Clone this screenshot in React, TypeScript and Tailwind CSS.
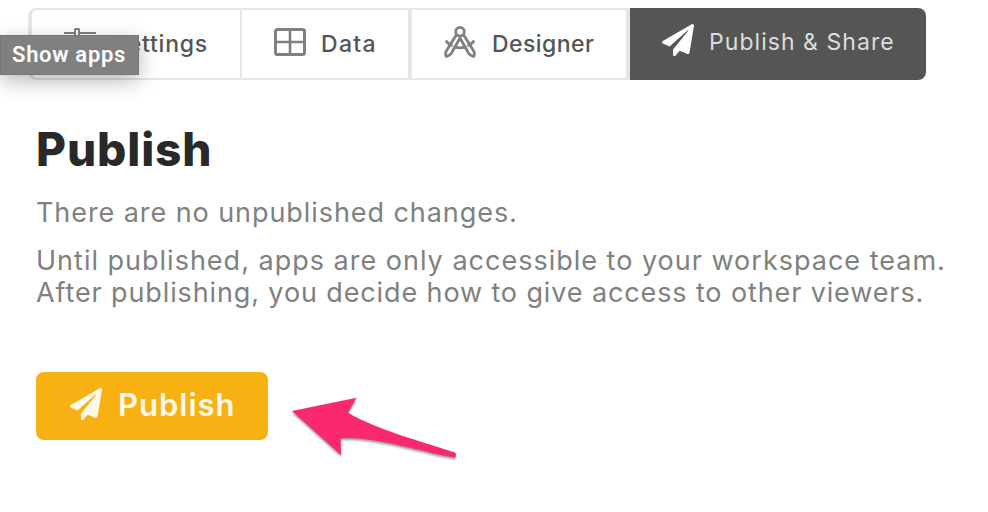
import React from "react";
import { FaPaperPlane } from "react-icons/fa";

const line = "border-[#e6e6e6]";

function SlidersIcon() {
  return (
    <svg className="h-8 w-8 shrink-0" viewBox="0 0 32 32" fill="none" stroke="#808080" strokeWidth="2">
      <path d="M0 5h10M16 5h16" />
      <rect x="11" y="1" width="4" height="8" rx="0.5" />
      <path d="M0 16h18M24 16h8M0 27h6M12 27h20" />
    </svg>
  );
}

function TableIcon() {
  return (
    <svg className="h-7 w-8 shrink-0" viewBox="0 0 32 28" fill="none" stroke="#808080">
      <rect x="1.5" y="1.5" width="29" height="25" rx="2" strokeWidth="3" />
      <path d="M16 2v24M2 14h28" strokeWidth="2.6" />
    </svg>
  );
}

function CompassIcon() {
  return (
    <svg className="h-8 w-8 shrink-0" viewBox="0 0 32 32" fill="none" stroke="#808080" strokeWidth="2.8" strokeLinejoin="round" strokeLinecap="round">
      <circle cx="16" cy="5.700" r="4.300" />
      <path d="M12.300 9L2 25.500Q1 30.500 2.800 30.500Q6 29.500 7.500 27L16 12L24.500 27Q26 29.500 29.200 30.500Q31 30.500 30 25.500L19.700 9" />
      <path d="M2.500 15.500Q5 18.500 7.500 19.500M11 21.200Q16 22.500 21 21.200M24.500 19.500Q27 18.500 29.500 15.500" />
    </svg>
  );
}

export default function App() {
  return (
    <div className="relative h-[512px] w-[988px] overflow-hidden bg-white px-7 pt-2 font-[Inter,sans-serif]">
      <nav className="flex h-[72px] w-[898px] text-[23px] font-medium leading-8 text-[#555]">
        <div className={`flex w-[214px] items-center rounded-l-lg border-y-2 border-r-2 border-l-4 ${line} pl-8`}>
          <SlidersIcon />
          <span className="ml-4 tracking-[0.8px]">Settings</span>
        </div>
        <div className={`flex w-[170px] items-center border-y-2 border-r-4 ${line} pl-8`}>
          <div className="-mt-1"><TableIcon /></div>
          <span className="ml-[15px] tracking-[1.3px]">Data</span>
        </div>
        <div className={`flex w-[218px] items-center border-y-2 border-r-4 ${line} pl-8`}>
          <div className="-mt-1"><CompassIcon /></div>
          <span className="ml-4 tracking-[0.45px]">Designer</span>
        </div>
        <div className="flex w-[296px] items-center rounded-r-lg bg-[#555] pb-1 pl-8 font-normal text-[#ddd]">
          <FaPaperPlane className="-mt-1 h-8 w-8 shrink-0 text-white" />
          <span className="ml-[15px] whitespace-nowrap tracking-[1.05px]">Publish &amp; Share</span>
        </div>
      </nav>
      <main className="pl-2">
        <h1 className="mt-[43px] text-[46px] font-extrabold leading-[52px] tracking-[0.9px] text-[#292929]">Publish</h1>
        <div className="mt-[22px] whitespace-nowrap text-[27px] leading-8 text-[#808080]">
          <p className="tracking-[0.93px]">There are no unpublished changes.</p>
          <p className="mt-4 tracking-[1px]">Until published, apps are only accessible to your workspace team.</p>
          <p className="tracking-[0.88px]">After publishing, you decide how to give access to other viewers.</p>
        </div>
        <button className="mt-[63px] flex h-[68px] w-[232px] items-center rounded-lg bg-[#f8b113] pl-[34px] text-[31px] font-semibold text-[#fff8eb]">
          <FaPaperPlane className="-mt-1 h-8 w-8 shrink-0" />
          <span className="-mt-0.5 ml-4 tracking-[1px]">Publish</span>
        </button>
      </main>
      <div className="absolute left-0 top-[35px] flex h-10 w-[139px] items-center border border-[#767676] bg-[#808080] pb-0.5 pl-[11px] text-white shadow-[0_6px_20px_rgba(0,0,0,0.28)]">
        <span className="whitespace-nowrap font-['Roboto',sans-serif] text-[22px] font-semibold tracking-[0.7px]">Show apps</span>
      </div>
      <svg className="absolute left-[280px] top-[380px] h-[100px] w-[200px] drop-shadow-[0_2px_1px_rgba(0,0,0,0.4)]" viewBox="0 0 200 100">
        <path d="M12 31L76.500 17.800L68 32.500C92 48 143 62 175 72.500Q177 75 175 77.500C145 73 90 55 60.500 58.500L61 75Z" fill="#fa286e" />
      </svg>
    </div>
  );
}
